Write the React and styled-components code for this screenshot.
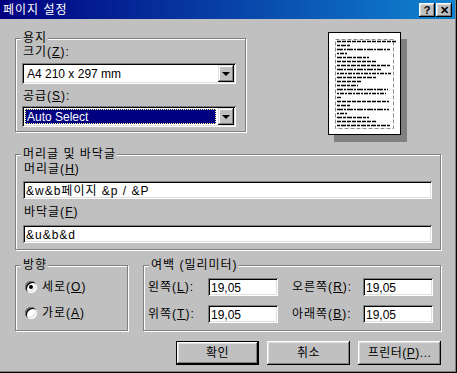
import React from "react";
import styled, { createGlobalStyle } from "styled-components";

const FONT = `"Liberation Sans", "Noto Sans CJK KR", sans-serif`;

const GlobalStyle = createGlobalStyle`
  html, body { margin: 0; padding: 0; background: #c0c0c0; }
  body { font-family: ${FONT}; font-size: 12px; }
`;

const Dialog = styled.div`
  width: 457px;
  height: 373px;
  box-sizing: border-box;
  background: #c0c0c0;
  color: #000;
  font-family: ${FONT};
  font-size: 12px;
  line-height: 14px;
  box-shadow: inset -1px -1px 0 #000, inset -2px -2px 0 #808080;
  overflow: hidden;
`;

const TitleBar = styled.div`
  height: 19px;
  margin-right: 2px;
  padding: 0 3px 0 3px;
  display: flex;
  align-items: center;
  background: linear-gradient(90deg, #000080 0%, #1084d0 100%);
  color: #fff;
`;

const TitleText = styled.div`
  flex: 1;
  font-size: 12px;
  letter-spacing: 1px;
`;

const TitleButton = styled.div`
  width: 16px;
  height: 14px;
  box-sizing: border-box;
  margin-left: ${(p) => p.$gap || 0}px;
  background: #c0c0c0;
  color: #000;
  font-weight: bold;
  font-size: 11px;
  line-height: 14px;
  display: flex;
  align-items: center;
  justify-content: center;
  box-shadow: inset -1px -1px 0 #000, inset 1px 1px 0 #fff,
    inset -2px -2px 0 #808080, inset 2px 2px 0 #dfdfdf;
`;

const Body = styled.div`
  padding: 13px 16px 0 15px;
  display: flex;
  flex-direction: column;
`;

const Row = styled.div`
  display: flex;
  align-items: ${(p) => p.$align || "stretch"};
  gap: ${(p) => p.$gap || 0}px;
  margin-top: ${(p) => p.$mt || 0}px;
`;

const GroupBox = styled.div`
  position: relative;
  box-sizing: border-box;
  width: ${(p) => p.$w}px;
  margin-top: ${(p) => p.$mt || 0}px;
  padding: ${(p) => p.$pad};
  border: 1px solid #808080;
  box-shadow: inset 1px 1px 0 #fff, 1px 1px 0 #fff;
`;

const GroupLabel = styled.span`
  position: absolute;
  top: -8px;
  left: 5px;
  padding: 0 1px 0 2px;
  background: #c0c0c0;
  line-height: 14px;
  letter-spacing: 1px;
  white-space: nowrap;
`;

const FieldLabel = styled.div`
  line-height: 14px;
  margin-top: ${(p) => p.$mt || 0}px;
  padding-left: 1px;
  letter-spacing: 1px;
`;

const sunken = `
  box-shadow: inset 1px 1px 0 #808080, inset -1px -1px 0 #fff,
    inset 2px 2px 0 #000, inset -2px -2px 0 #dfdfdf;
`;

const Combo = styled.div`
  box-sizing: border-box;
  height: 21px;
  margin-top: ${(p) => p.$mt || 0}px;
  padding: 2px;
  display: flex;
  align-items: stretch;
  background: #fff;
  ${sunken}
`;

const ComboValue = styled.div`
  flex: 1;
  display: flex;
  align-items: center;
  margin: 1px 2px 1px 1px;
  padding-left: 2px;
  background: ${(p) => (p.$selected ? "#000080" : "transparent")};
  color: ${(p) => (p.$selected ? "#fff" : "#000")};
  outline: ${(p) => (p.$selected ? "1px dotted #ffff9a" : "none")};
  outline-offset: -1px;
`;

const ComboButton = styled.div`
  width: 16px;
  box-sizing: border-box;
  display: flex;
  align-items: center;
  justify-content: center;
  background: #c0c0c0;
  box-shadow: inset -1px -1px 0 #000, inset 1px 1px 0 #dfdfdf,
    inset -2px -2px 0 #808080, inset 2px 2px 0 #fff;
`;

const Arrow = styled.span`
  width: 0;
  height: 0;
  border-left: 4px solid transparent;
  border-right: 4px solid transparent;
  border-top: 4px solid #000;
  margin-top: 1px;
`;

const Edit = styled.div`
  box-sizing: border-box;
  height: 18px;
  margin-top: ${(p) => p.$mt || 0}px;
  padding: 2px 3px 0 3px;
  display: flex;
  align-items: center;
  background: #fff;
  white-space: nowrap;
  letter-spacing: ${(p) => (p.$wide ? 1 : 0)}px;
  ${sunken}
`;

const Preview = styled.div`
  margin-left: 82px;
`;

const Paper = styled.div`
  width: 73px;
  height: 103px;
  box-sizing: border-box;
  border: 1px solid #000;
  background: #fff;
  box-shadow: 6px 7px 0 #808080;
  svg {
    display: block;
  }
`;

const MarginGrid = styled.div`
  display: grid;
  grid-template-columns: 60px 70px 85px 70px;
  grid-auto-rows: 18px;
  row-gap: 9px;
  align-items: center;
`;

const MarginLabel = styled.div`
  padding-left: ${(p) => (p.$indent ? 14 : 0)}px;
  white-space: nowrap;
  letter-spacing: 1px;
`;

const RadioList = styled.div`
  display: grid;
  grid-auto-rows: 18px;
  row-gap: 8px;
  align-items: center;
`;

const RadioRow = styled.div`
  display: flex;
  align-items: center;
  gap: 5px;
  letter-spacing: 1px;
`;

const RadioDot = styled.span`
  width: 12px;
  height: 12px;
  border-radius: 50%;
  background: #fff;
  display: flex;
  align-items: center;
  justify-content: center;
  box-shadow: inset 1px 1px 0 #808080, inset -1px -1px 0 #fff,
    inset 2px 2px 0 #000, inset -2px -2px 0 #dfdfdf;
  &::after {
    content: "";
    width: 4px;
    height: 4px;
    border-radius: 50%;
    background: ${(p) => (p.$checked ? "#000" : "transparent")};
  }
`;

const ButtonRow = styled.div`
  display: flex;
  justify-content: flex-end;
  gap: 8px;
  margin-top: 10px;
`;

const Button = styled.div`
  width: 83px;
  height: 24px;
  box-sizing: border-box;
  display: flex;
  align-items: center;
  justify-content: center;
  background: #c0c0c0;
  letter-spacing: 0.5px;
  border: ${(p) => (p.$default ? "1px solid #000" : "none")};
  box-shadow: inset -1px -1px 0 #000, inset 1px 1px 0 #fff,
    inset -2px -2px 0 #808080, inset 2px 2px 0 #dfdfdf;
`;

const LINES = [60, 14, 53, 11, 32, 39, 54, 44, 54, 39, 24, 21, 51, 49, 4, 52, 14, 52, 11, 32, 39, 54];
const DASHES = ["4 1", "3 1 5 1", "6 1 2 1", "2 1 4 1", "5 1 3 1"];

function PagePreview() {
  return (
    <Preview>
      <Paper>
        <svg width="71" height="101" viewBox="0 0 71 101">
          <rect x="6.5" y="6.5" width="58" height="89" fill="none" stroke="#8a8a8a" strokeDasharray="4 2" />
          {LINES.map((len, i) => (
            <line
              key={i}
              x1="8"
              x2={8 + len}
              y1={8.5 + i * 4}
              y2={8.5 + i * 4}
              stroke="#000"
              strokeWidth="1.4"
              strokeDasharray={DASHES[i % DASHES.length]}
            />
          ))}
        </svg>
      </Paper>
    </Preview>
  );
}

function ComboBox({ value, selected, mt }) {
  return (
    <Combo $mt={mt}>
      <ComboValue $selected={selected}>{value}</ComboValue>
      <ComboButton>
        <Arrow />
      </ComboButton>
    </Combo>
  );
}

export default function App() {
  return (
    <>
      <GlobalStyle />
      <Dialog>
        <TitleBar>
          <TitleText>페이지 설정</TitleText>
          <TitleButton>?</TitleButton>
          <TitleButton $gap={1}>✕</TitleButton>
        </TitleBar>
        <Body>
          <Row $align="flex-start">
            <GroupBox $w={231} $mt={6} $pad="6px 9px 4px 6px">
              <GroupLabel>용지</GroupLabel>
              <FieldLabel>
                크기(<u>Z</u>):
              </FieldLabel>
              <ComboBox value="A4 210 x 297 mm" mt={4} />
              <FieldLabel $mt={5}>
                공급(<u>S</u>):
              </FieldLabel>
              <ComboBox value="Auto Select" selected mt={3} />
            </GroupBox>
            <PagePreview />
          </Row>

          <GroupBox $w={426} $mt={19} $pad="7px 8px 6px 7px">
            <GroupLabel>머리글 및 바닥글</GroupLabel>
            <FieldLabel>
              머리글(<u>H</u>)
            </FieldLabel>
            <Edit $mt={5} $wide>&amp;w&amp;b페이지 &amp;p / &amp;P</Edit>
            <FieldLabel $mt={6}>
              바닥글(<u>F</u>)
            </FieldLabel>
            <Edit $mt={6} $wide>&amp;u&amp;b&amp;d</Edit>
          </GroupBox>

          <Row $gap={15} $mt={15}>
            <GroupBox $w={113} $pad="12px 4px 7px 9px">
              <GroupLabel>방향</GroupLabel>
              <RadioList>
                <RadioRow>
                  <RadioDot $checked />
                  <span>
                    세로(<u>O</u>)
                  </span>
                </RadioRow>
                <RadioRow>
                  <RadioDot />
                  <span>
                    가로(<u>A</u>)
                  </span>
                </RadioRow>
              </RadioList>
            </GroupBox>
            <GroupBox $w={298} $pad="12px 7px 7px 4px">
              <GroupLabel>여백 (밀리미터)</GroupLabel>
              <MarginGrid>
                <MarginLabel>
                  왼쪽(<u>L</u>):
                </MarginLabel>
                <Edit>19,05</Edit>
                <MarginLabel $indent>
                  오른쪽(<u>R</u>):
                </MarginLabel>
                <Edit>19,05</Edit>
                <MarginLabel>
                  위쪽(<u>T</u>):
                </MarginLabel>
                <Edit>19,05</Edit>
                <MarginLabel $indent>
                  아래쪽(<u>B</u>):
                </MarginLabel>
                <Edit>19,05</Edit>
              </MarginGrid>
            </GroupBox>
          </Row>

          <ButtonRow>
            <Button $default>확인</Button>
            <Button>취소</Button>
            <Button>
              프린터(<u>P</u>)...
            </Button>
          </ButtonRow>
        </Body>
      </Dialog>
    </>
  );
}
